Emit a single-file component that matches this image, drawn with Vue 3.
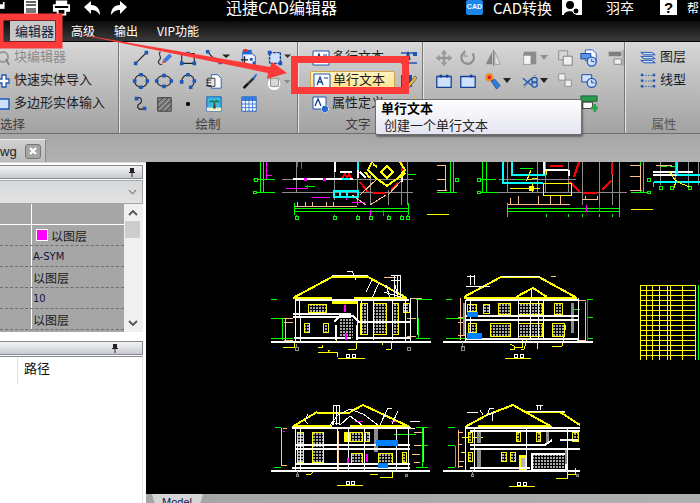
<script setup>
const rows = [
  { text: "以图层", swatch: true },
  { text: "A-SYM", latin: true },
  { text: "以图层" },
  { text: "10", latin: true },
  { text: "以图层" }
];

const tableRows = [285, 290, 295, 300, 305, 310, 315, 320, 325, 330, 335, 340, 345, 350, 355];
const tableCols = [640, 646, 652, 659, 667, 670, 682, 695];

// x, y, w, h of each window on the four elevations
const windows = [
  [360, 303, 8, 32], [373, 303, 14, 32], [392, 303, 7, 32], [308, 304, 19, 9],
  [304, 323, 6, 10], [323, 323, 6, 10], [403, 303, 7, 10],
  [498, 303, 13, 12], [518, 303, 25, 12], [554, 303, 9, 12], [490, 323, 21, 14],
  [518, 323, 25, 14], [552, 323, 13, 14], [467, 304, 10, 8], [483, 304, 7, 10], [468, 323, 9, 10],
  [297, 432, 7, 31], [312, 432, 12, 31], [350, 432, 13, 10], [365, 432, 5, 10],
  [351, 453, 12, 11], [378, 453, 15, 11], [402, 452, 5, 11],
  [468, 432, 5, 11], [468, 452, 5, 10], [516, 432, 5, 10], [536, 432, 5, 10],
  [501, 452, 6, 10], [510, 452, 6, 10], [572, 432, 7, 10]
];
</script>

<template>
  <div class="app">
    <header class="title-bar">
      <svg class="qa save" viewBox="0 0 14 14"><path d="M-6 0H8V12H-6Z" fill="#fff"/><path d="M-2 0H5V4H-2Z" fill="#000"/></svg>
      <svg class="qa pdf" viewBox="0 0 16 14"><path d="M1 0H15V14H1Z" fill="#fff"/><path d="M3 2H13M3 5H13" stroke="#333" stroke-width="1.4"/><path d="M3 8H13V13H3Z" fill="#777"/></svg>
      <svg class="qa printer" viewBox="0 0 20 16"><path d="M4 0H16V4H19V12H15V16H5V12H1V4H4Z" fill="#fff"/><path d="M3 6H17V8H3ZM7 10H13V14H7Z" fill="#000"/></svg>
      <svg class="qa undo" viewBox="0 0 18 16"><path d="M8 1V5C13 5 17 8 17 15C14 11 12 10 8 10V14L1 7Z" fill="#fff"/></svg>
      <svg class="qa redo" viewBox="0 0 18 16"><path d="M10 1V5C5 5 1 8 1 15C4 11 6 10 10 10V14L17 7Z" fill="#fff"/></svg>
      <span class="app-name">迅捷CAD编辑器</span>
      <span class="cad-badge">CAD</span>
      <span class="convert">CAD转换</span>
      <svg class="user-icon" viewBox="0 0 20 15"><path d="M0 0H20V15H0Z" fill="#fff"/><circle cx="8" cy="5" r="4" fill="#000"/><path d="M2 15C2 10 14 10 14 15Z" fill="#000"/><circle cx="14" cy="11" r="3" fill="#000" stroke="#fff"/></svg>
      <span class="user-name">羽卒</span>
      <span class="help-box">?</span>
      <span class="help-text">帮</span>
    </header>

    <nav class="tab-bar">
      <span class="tab active">编辑器</span>
      <span class="tab first">高级</span>
      <span class="tab">输出</span>
      <span class="tab">VIP功能</span>
    </nav>

    <section class="ribbon">
      <div class="group g1">
        <div class="row muted">
          <svg class="mini" viewBox="0 0 12 16"><circle cx="3" cy="7" r="5" fill="none" stroke="#999" stroke-width="2"/><path d="M6 9L9 15" stroke="#888" stroke-width="2"/></svg>
          <span>块编辑器</span>
        </div>
        <div class="row">
          <svg class="mini" viewBox="0 0 12 16"><path d="M-2 6H2V2H6V6H9V10H6V14H2V10H-2Z" fill="#fff" stroke="#1d57b5" stroke-width="1.3"/></svg>
          <span>快速实体导入</span>
        </div>
        <div class="row">
          <svg class="mini" viewBox="0 0 12 16"><path d="M-1 3H9V13H-1Z" fill="#cfe0fa" stroke="#1d57b5" stroke-width="1.4"/></svg>
          <span>多边形实体输入</span>
        </div>
        <div class="group-label left">选择</div>
      </div>

      <div class="group g2">
        <div class="icon-grid">
          <svg class="ic" viewBox="0 0 20 20"><path d="M4 16L16 4" stroke="#222" stroke-width="1.3"/><path d="M2 14H6V18H2ZM14 2H18V6H14Z" fill="#1d57b5"/></svg>
          <svg class="ic" viewBox="0 0 20 20"><path d="M6 3C2 6 9 9 5 12C2 15 5 18 8 17" fill="none" stroke="#333" stroke-width="1.2"/><path d="M9 12L16 5L19 8L12 15Z" fill="#3d7be0"/><path d="M9 12L8 16L12 15Z" fill="#e04040"/></svg>
          <svg class="ic" viewBox="0 0 20 20"><path d="M3 5H17V16H3Z" fill="none" stroke="#222" stroke-width="1.2"/><path d="M1 14H5V18H1ZM15 14H19V18H15ZM8 3H12V7H8Z" fill="#1d57b5"/></svg>
          <svg class="ic" viewBox="0 0 20 20"><path d="M3 2C6 8 9 12 17 15" fill="none" stroke="#222" stroke-width="1.2"/><path d="M1 1H5V5H1ZM7 9H11V13H7ZM15 13H19V17H15Z" fill="#1d57b5"/><path d="M19 6H28L23.5 10Z" fill="#222"/></svg>
          <svg class="ic" viewBox="0 0 20 20"><path d="M3 4H12L17 8V18H3Z" fill="#eef3fc" stroke="#1d57b5"/><path d="M3 1H13V6H3Z" fill="#2368d0"/><path d="M4 0H8V3H4Z" fill="#d33"/><path d="M1 12H9M5 8V16" stroke="#222" stroke-width="1.5"/><path d="M11 10H14V13H11ZM14 14H17V17H14Z" fill="#1d57b5"/></svg>
          <svg class="ic" viewBox="0 0 20 20"><path d="M4 4H16V16H4Z" fill="#cfe0fa" stroke="#123f96" stroke-width="1.6" stroke-dasharray="3 1"/><path d="M2 2H6V6H2ZM14 14H18V18H14Z" fill="#1d57b5"/><path d="M20 6H28L24 10Z" fill="#333"/></svg>

          <svg class="ic" viewBox="0 0 20 20"><circle cx="10" cy="10" r="7" fill="none" stroke="#222" stroke-width="1.2"/><path d="M8 1H12V5H8ZM8 15H12V19H8ZM1 8H5V12H1ZM15 8H19V12H15Z" fill="#1d57b5"/></svg>
          <svg class="ic" viewBox="0 0 20 20"><ellipse cx="10" cy="10" rx="8" ry="6" fill="none" stroke="#222" stroke-width="1.2"/><path d="M8 2H12V6H8ZM8 14H12V18H8ZM0 8H4V12H0ZM16 8H20V12H16Z" fill="#1d57b5"/></svg>
          <svg class="ic" viewBox="0 0 20 20"><path d="M3 11A7 7 0 1 1 12 17" fill="none" stroke="#222" stroke-width="1.2"/><path d="M1 9H5V13H1ZM8 1H12V5H8ZM15 8H19V12H15ZM11 15H15V19H11Z" fill="#1d57b5"/></svg>
          <svg class="ic" viewBox="0 0 20 20"><path d="M7 3H14L18 7V18H7Z" fill="#fff" stroke="#1d57b5"/><path d="M3 7H11V16H3Z" fill="#e8e8e8" stroke="#333"/><path d="M1 9H7M1 12H7M1 15H7" stroke="#222"/></svg>
          <svg class="ic" viewBox="0 0 20 20"><path d="M3 17L8 12L10 14L5 19Z" fill="#111"/><path d="M8 12L14 6L16 8L10 14Z" fill="#333"/><path d="M14 6L18 2L19 3L16 8Z" fill="#2368d0"/></svg>
          <svg class="ic" viewBox="0 0 20 20"><circle cx="9" cy="13" r="6" fill="#f4f4f4" stroke="#fff" stroke-width="2"/><path d="M5 7H14V16H5Z" fill="#d7d7d7" stroke="#8a8a8a"/><path d="M20 9H27L23.5 13Z" fill="#8a8a8a"/></svg>

          <svg class="ic" viewBox="0 0 20 20"><path d="M5 4C11 0 12 8 8 10C4 12 7 18 13 15" fill="none" stroke="#222" stroke-width="1.2"/><path d="M3 2H7V6H3ZM12 13H16V17H12Z" fill="#1d57b5"/></svg>
          <svg class="ic" viewBox="0 0 20 20"><path d="M3 3H18V18H3Z" fill="#8c8c8c" stroke="#333"/><path d="M3 9L9 3M3 15L15 3M6 18L18 6M12 18L18 12" stroke="#333"/></svg>
          <svg class="ic" viewBox="0 0 20 20"><path d="M8 8H12V12H8Z" fill="#000"/></svg>
          <svg class="ic" viewBox="0 0 20 20"><path d="M2 2H18V18H2Z" fill="#3db4e2" stroke="#1d57b5"/><path d="M2 14H18V18H2Z" fill="#f0f0d0"/><path d="M9 15L10 8H11L12 15Z" fill="#4b3a1e"/><path d="M4 9C6 5 10 5 10.500 8C11 5 15 5 17 9C14 7 12 8 10.500 9C9 8 7 7 4 9Z" fill="#0c7a3a"/></svg>
          <svg class="ic" viewBox="0 0 20 20"><path d="M2 2H18V18H2Z" fill="#fff" stroke="#1d57b5"/><path d="M2 2H18V6H2Z" fill="#3b7de0"/><path d="M2 6H18M2 10H18M2 14H18M6 2V18M10 2V18M14 2V18" stroke="#2f6fd6"/></svg>
          <span></span>
        </div>
        <div class="group-label">绘制</div>
      </div>

      <div class="group g3">
        <div class="text-block">
          <div class="text-col">
            <div class="row tool">
              <svg class="tool-ic" viewBox="0 0 18 18"><path d="M1 2H17V16H1Z" fill="#fff" stroke="#1d57b5"/><path d="M4 13L7 5L10 13M5 10H9" fill="none" stroke="#123f96" stroke-width="1.3"/><path d="M11 6H15M11 9H15M11 12H15" stroke="#123f96"/></svg>
              <span>多行文本</span>
            </div>
            <div class="row tool hot">
              <svg class="tool-ic" viewBox="0 0 18 18"><path d="M1 2H17V16H1Z" fill="#fff" stroke="#1d57b5"/><path d="M4 13L7 5L10 13M5 10H9" fill="none" stroke="#123f96" stroke-width="1.3"/><path d="M11 6H15" stroke="#123f96"/></svg>
              <span>单行文本</span>
            </div>
            <div class="row tool">
              <svg class="tool-ic" viewBox="0 0 18 18"><path d="M1 2H14V14H1Z" fill="#fff" stroke="#1d57b5"/><path d="M3 11L6 4L9 11" fill="none" stroke="#123f96" stroke-width="1.3"/><circle cx="13" cy="14" r="3.500" fill="#2368d0" stroke="#fff" stroke-dasharray="1.500 1"/></svg>
              <span>属性定义</span>
            </div>
          </div>
          <div class="side-col">
            <svg class="side-ic" viewBox="0 0 18 18"><path d="M1 4H17M1 14H17" stroke="#1d57b5" stroke-width="1.3"/><path d="M6 11L8 3L10 11" fill="none" stroke="#123f96" stroke-width="1.3"/><path d="M13 3H17V7H13Z" fill="#1d57b5"/></svg>
            <svg class="side-ic" viewBox="0 0 18 18"><path d="M1 3H12V15H1Z" fill="#1d4fa8"/><path d="M6 15L15 4L17 6L8 17Z" fill="#e9c33c" stroke="#333" stroke-width=".6"/></svg>
            <svg class="side-ic" viewBox="0 0 18 18"><path d="M1 5H13V16H1Z" fill="#fff" stroke="#1d57b5"/><path d="M9 9L15 2L17 4L11 11Z" fill="#e9c33c"/></svg>
          </div>
        </div>
        <div class="group-label offset">文字</div>
      </div>

      <div class="group g4">
        <div class="modify-grid">
          <svg class="ic" viewBox="0 0 20 20"><path d="M10 1L13 5H11V9H15V7L19 10L15 13V11H11V15H13L10 19L7 15H9V11H5V13L1 10L5 7V9H9V5H7Z" fill="#9b9b9b" stroke="#8a8a8a" stroke-width=".4"/></svg>
          <svg class="ic" viewBox="0 0 20 20"><path d="M15 5A7 7 0 1 1 7 3" fill="none" stroke="#8d8d8d" stroke-width="2.400"/><path d="M6 1V8H10" fill="none" stroke="#9e9e9e" stroke-width="1.400"/></svg>
          <svg class="ic" viewBox="0 0 20 20"><path d="M9 3L2 17H9Z" fill="#868686"/><path d="M12 3L18 17H12Z" fill="#e3e3e3" stroke="#999"/><path d="M10.500 1V19" stroke="#777"/></svg>
          <span class="with-caret">
            <svg class="ic" viewBox="0 0 20 20"><path d="M3 3H17V17H3Z" fill="#8c8c8c"/><path d="M3 7H11V17H3Z" fill="#f5f5f5" stroke="#777" stroke-dasharray="1.500 1"/></svg>
            <i class="caret dim"></i>
          </span>
          <svg class="ic" viewBox="0 0 20 20"><path d="M3 2H13V12H3Z" fill="#d6d6d6" stroke="#8a8a8a"/><path d="M8 8H18V18H8Z" fill="#efefef" stroke="#777"/></svg>
          <svg class="ic" viewBox="0 0 20 20"><path d="M6 1H14L18 5V13H6Z" fill="#fff" stroke="#1d57b5"/><path d="M1 5H12V11H1Z" fill="#5c93ec" stroke="#123f96"/><circle cx="13" cy="14" r="5" fill="#cfe0fa" stroke="#1d57b5" stroke-width="1.400"/><path d="M13 11V14H16" fill="none" stroke="#123f96"/></svg>
          <svg class="ic" viewBox="0 0 20 20"><path d="M3 3H17V8H3Z" fill="#7e7e7e"/><path d="M9 11H17V17H9Z" fill="#efefef" stroke="#7e7e7e"/><path d="M19 1V19" stroke="#8a8a8a"/></svg>

          <svg class="ic" viewBox="0 0 20 20"><path d="M2 5H18V17H2Z" fill="#cfe0fa" stroke="#123f96" stroke-width="1.400"/><path d="M5 3H8V6H5ZM12 3H15V6H12Z" fill="#123f96"/></svg>
          <svg class="ic" viewBox="0 0 20 20"><path d="M2 5H18V17H2Z" fill="#cfe0fa" stroke="#123f96" stroke-width="1.400"/><path d="M12 3H15V6H12Z" fill="#123f96"/></svg>
          <span class="with-caret">
            <svg class="ic" viewBox="0 0 20 20"><circle cx="6" cy="6" r="4.500" fill="#ef8b2a"/><circle cx="6" cy="6" r="2" fill="#d22"/><path d="M8 10L12 8L18 15L14 19Z" fill="#2f7fd6" stroke="#123f96" stroke-width=".8"/></svg>
            <i class="caret"></i>
          </span>
          <span class="with-caret">
            <svg class="ic" viewBox="0 0 20 20"><path d="M3 18L17 2" stroke="#777" stroke-dasharray="2 1"/><path d="M2 7L12 15M12 7L3 15" stroke="#1d57b5" stroke-width="1.400"/><circle cx="15" cy="9" r="3" fill="none" stroke="#1d57b5" stroke-width="1.400"/><circle cx="15" cy="14" r="3" fill="none" stroke="#1d57b5" stroke-width="1.400"/></svg>
            <i class="caret"></i>
          </span>
          <svg class="ic" viewBox="0 0 20 20"><path d="M3 2H10V9H3Z" fill="#efefef" stroke="#8a8a8a"/><path d="M10 9H17V16H10Z" fill="#efefef" stroke="#8a8a8a"/></svg>
          <svg class="ic" viewBox="0 0 20 20"><path d="M2 3H13V11H2Z" fill="#cfe0fa" stroke="#123f96"/><circle cx="13" cy="12" r="5" fill="#cfe0fa" stroke="#1d57b5" stroke-width="1.400"/><path d="M13 9V12H16" fill="none" stroke="#123f96"/></svg>
          <span></span>

          <span></span><span></span><span></span><span></span><span></span>
          <svg class="ic" viewBox="0 0 20 20"><path d="M1 1H19V7H1Z" fill="#2a9a4c" stroke="#17602e"/><path d="M3 8H14V15H3Z" fill="#fff" stroke="#333"/><path d="M12 13H15V10H18V13H20V16H18V19H15V16H12Z" fill="#28a745"/></svg>
          <span></span>
        </div>
      </div>

      <div class="group g5">
        <div class="row prop">
          <svg class="prop-ic" viewBox="0 0 20 20"><path d="M1 3H15L19 6H5ZM1 8H15L19 11H5ZM1 13H15L19 16H5Z" fill="#cfe0fa" stroke="#1d57b5" stroke-width="1.200"/></svg>
          <span>图层</span>
        </div>
        <div class="row prop">
          <svg class="prop-ic" viewBox="0 0 20 20"><path d="M3 3H17M3 10H17M3 17H17" stroke="#1d57b5" stroke-dasharray="2 1.500"/><path d="M1 1H4V4H1ZM16 1H19V4H16ZM1 8H4V11H1ZM16 8H19V11H16ZM1 15H4V18H1ZM16 15H19V18H16Z" fill="#1d57b5"/></svg>
          <span>线型</span>
        </div>
        <div class="group-label bottom">属性</div>
      </div>
    </section>

    <div class="doc-strip">
      <div class="doc-tab">
        <span class="doc-name">wg</span>
        <span class="doc-close">
          <svg viewBox="0 0 10 10"><path d="M2 2L8 8M8 2L2 8" stroke="#fff" stroke-width="2.200"/></svg>
        </span>
      </div>
    </div>

    <main class="workspace">
      <aside class="side">
        <div class="panel-head">
          <svg class="pin" viewBox="0 0 10 10"><path d="M3 1H7V5H8V6H5.500V10H4.500V6H2V5H3Z" fill="#222"/></svg>
        </div>
        <div class="combo">
          <svg class="chev" viewBox="0 0 10 6"><path d="M1 1L5 5L9 1" fill="none" stroke="#777" stroke-width="1.200"/></svg>
        </div>
        <div class="prop-table">
          <div class="cells">
            <div class="cell-row head"><span class="c1"></span><span class="c2"></span></div>
            <div v-for="(row, i) in rows" :key="i" class="cell-row">
              <span class="c1"></span>
              <span class="c2" :class="{ latin: row.latin, swatched: row.swatch }">
                <i v-if="row.swatch" class="swatch"></i>{{ row.text }}
              </span>
            </div>
          </div>
          <div class="scroll">
            <svg class="arrow" viewBox="0 0 10 6"><path d="M1 5L5 1L9 5" fill="none" stroke="#555" stroke-width="1.800"/></svg>
            <div class="thumb"></div>
            <svg class="arrow down" viewBox="0 0 10 6"><path d="M1 1L5 5L9 1" fill="none" stroke="#555" stroke-width="1.800"/></svg>
          </div>
        </div>
        <div class="panel-head second">
          <svg class="pin" viewBox="0 0 10 10"><path d="M3 1H7V5H8V6H5.500V10H4.500V6H2V5H3Z" fill="#222"/></svg>
        </div>
        <div class="path-list">
          <div class="path-head"><span class="path-gutter"></span><span class="path-title">路径</span></div>
        </div>
      </aside>

      <section class="canvas">
        <svg class="drawing" viewBox="146 162 554 332" shape-rendering="crispEdges" fill="none">
          <defs>
            <pattern id="win" width="3" height="3" patternUnits="userSpaceOnUse">
              <rect width="3" height="3" fill="#a8a8a8"/>
              <path d="M0 0.500H3M0.500 0V3" stroke="#000"/>
            </pattern>
          </defs>
          <!-- top plans -->
          <g stroke="#8c8c8c">
            <path d="M282 179H413M282 192H413M497 192H627M499 179H576M296 162V192M334 162V200M357 162V205M370 175V205M388 190V205M401 162V205M407 162V205"/>
            <path d="M507 162V192M537 162V192M545 162V192M568 162V192M582 162V205M599 162V205M612 162V205M619 162V205M660 162V185M675 162V185M688 162V185M698 162V185"/>
          </g>
          <g stroke="#ffffff" stroke-width="2">
            <path d="M293 179H353M335 162V172M358 162V178M340 172H352M402 176V182M360 172L366 178M544 162V176M545 170H568M569 170V176M653 172H693M653 175H693"/>
          </g>
          <path d="M304 178H307V181H304ZM323 178H326V181H323Z" fill="#ff00ff"/>
          <g stroke="#00ff00">
            <path d="M294 203V215M408 203V215M294 208H408M294 211H408M296 215V218M334 215V218M357 215V218M370 215V218M388 215V218M401 215V218M407 215V218"/>
            <path d="M260 162V192M263 162V192M253 179H275M253 192H275M437 192H457M450 162V192M453 162V192M477 179H496M477 192H497M482 162V192M486 162V192"/>
            <path d="M507 203V215M619 203V215M507 208H619M507 211H619M507 214V217M546 214V217M568 214V217M582 214V217M599 214V217M612 214V217M619 214V217M631 192H647M640 162V192M643 162V192"/>
            <path d="M520 168H533M515 179H523M553 183H560M653 182V187M672 187V188M688 185V188M661 166H667M670 166H676M305 186H315M407 174H416"/>
            <path d="M271 299H277M271 318H293M271 338H293M282 318V340M416 299H432M418 318V338M416 338H430"/>
            <path d="M446 299H452M446 318H465M446 338H465M587 299H593M587 317H593M587 338H593M572 309H580"/>
            <path d="M275 427H281M274 467H281M422 427V467M416 427H428M416 445H428M416 467H428M394 434H416"/>
            <path d="M448 427H455M448 445H455M448 467H455M455 446V467M698 285V360"/>
          </g>
          <g stroke="#00ff00" fill="#000">
            <path d="M254 178H257V181H254ZM253 191H256V193H253ZM295 216H298V219H295ZM333 216H336V219H333ZM356 216H359V219H356ZM369 216H372V219H369ZM387 216H390V219H387ZM400 216H403V219H400ZM406 216H409V219H406ZM455 178H458V181H455ZM477 178H480V181H477ZM477 191H480V193H477ZM647 178H650V181H647ZM647 191H650V193H647ZM659 186H662V189H659ZM670 186H673V189H670ZM688 186H691V189H688Z"/>
          </g>
          <g stroke="#ff00ff">
            <path d="M266 162V179M266 175H272M286 188H307V185M312 197H330M352 202H365M346 190V200M383 210V216M370 210V216M297 162V167M301 162V169M586 205V212M599 205V212M587 300V342M578 342H593"/>
            <path d="M283 431H285M283 428H285M355 421H363M391 421H399"/>
          </g>
          <g stroke="#ff0000" stroke-width="2">
            <path d="M360 182L368 192M373 193H385M391 190L398 183M402 163V175M342 178L345 174L347 178L349 174L351 178"/>
            <path d="M550 166H563M570 182L580 192M583 193H598M602 190L611 181M612 163V175M574 177L579 162"/>
          </g>
          <g stroke="#00ffff" stroke-width="2">
            <path d="M503 162V183H543M512 162V175H545M342 179H350M334 191H358V197H334ZM340 192V197M347 192V197M654 182H700M677 175H700M677 162V175M358 162V170"/>
          </g>
          <g stroke="#ffc08a">
            <path d="M295 206H357M297 202V206M305 202V206M312 202V206M326 202V206M333 202V206M352 195L366 205M386 195L370 205M378 178L360 195M402 180L388 195M437 165H445M437 179H445M437 190H447M445 165V190"/>
            <path d="M508 204H570M510 198V204M518 196V204M538 196V204M550 196V204M560 196V204M582 199H598M585 196V199M597 196V199M630 165H640M630 176H640M630 190H642M640 165V190"/>
            <path d="M656 165H672M284 318H293M284 322H293M284 340H293M285 318V342M356 276H362M384 277H396M410 298H422M417 298V335M407 318H416M407 336H416"/>
            <path d="M458 317H465M458 322H466M458 335H465M460 298V340M551 276H556M577 300H586M577 340H586M585 302V342M298 446H302M306 463H312"/>
            <path d="M281 465V428M281 465H287M283 428H287M338 431V470M423 428V462M414 432H422M414 445H421M412 454H420M414 462H420M458 430V468M458 432H463M458 444H462M458 461H464M458 466H463"/>
            <path d="M326 464H338"/>
          </g>
          <g stroke="#ffff00">
            <path d="M427 214H449M631 209H653M338 358H365M505 358H531M337 485H363M509 486H535"/>
            <path d="M318 347H322V345M330 350H328V353M318 352H337V357M336 330V342M356 342V349M348 349H356M391 342V349M386 349H391M382 342V345M283 347H294V343"/>
            <path d="M510 344L514 346V349H510M522 340V347H514M521 349H524L527 340M552 346H562L566 325M541 342H537V349"/>
            <path d="M306 474H311L314 471M380 477H392V471M370 474H378"/>
            <path d="M556 478H567V464M567 474H575V468M461 452H466M462 437H483"/>
            <path d="M543 168V175M543 183H571V195H543ZM546 170V175M510 188H540M532 183V192M531 170L527 180L538 178M670 172L675 180L682 184L690 187M676 181L674 188"/>
          </g>
          <path d="M381 172L387 166L393 172L387 178ZM372 162L368 170L376 178L387 186L398 178L405 170L400 162M365 172L370 178M400 178L405 173M373 164L377 167" stroke="#ffff00" stroke-width="2"/>
          <path d="M529 186H533V190H529Z" fill="#ffff00" stroke="#ffff00"/>
          <g stroke="#ffff00" stroke-width="2">
            <path d="M293 298L332 277M368 277L407 298M293 298H332M354 298H406M332 277H368"/>
            <path d="M464 297L490 283M490 283L501 277M539 277L577 298M464 298H577M516 297L533 288L547 297M501 277H539"/>
            <path d="M292 427L317 412M350 412L363 405L410 427M317 413H350M295 426H332M350 426H407"/>
            <path d="M465 427L487 415L513 405L552 427M527 412H565M560 412L580 425M478 426H550"/>
          </g>

          <!-- elevation fills -->
          <path d="M332 301H357V304H332ZM344 432H350V442H344ZM519 455H527V470H519Z" fill="#ffff00"/>
          <path d="M521 458H525V468H521Z" fill="#b5b5b5"/>
          <g v-for="(w, i) in windows" :key="i">
            <rect :x="w[0]" :y="w[1]" :width="w[2]" :height="w[3]" fill="#ffff00"/>
            <rect :x="w[0] + 1" :y="w[1] + 1" :width="w[2] - 2" :height="w[3] - 2" fill="url(#win)"/>
          </g>
          <path d="M340 318H353V338H340Z" fill="url(#win)"/>
          <path d="M533 455H564V469H533Z" fill="url(#win)"/>
          <path d="M531.500 453.500H565.500V470H531.500Z" stroke="#fff" stroke-width="2"/>
          <g fill="#8c8c8c">
            <path d="M463 303H466V335H463ZM571 303H574V333H571ZM374 428H378V452H374ZM477 431H481V443H477ZM477 450H481V467H477ZM546 431H549V443H546ZM565 450H568V464H565Z"/>
          </g>

          <!-- white structure -->
          <g stroke="#ffffff">
            <path d="M347 271L352 271L355 277V280M332 275H368M295 299V342M299 299V318M300 318V342M357 299V340M361 299V335M373 299V340M392 299V340M410 298V342M405 298V342"/>
            <path d="M366 292L372 280M379 283L372 298M386 285L390 298M384 292L400 297M395 285L398 298"/>
            <path d="M391 275H400V298M394 275V298M397 275V298M391 280H400"/>
            <path d="M465 300V342M470 300V340M501 276H539M518 300V340M531 288V298M530 300V340M538 300V340M543 300V340M578 298V342M467 276H475M470 275V285M474 275V285M466 286H490"/>
            <path d="M295 428V470M300 428V470M337 428V470M348 428V470M364 428V470M396 428V470M408 428V470M398 411L392 424M392 408H388L380 425M330 425L338 415L350 409L363 414L378 425M340 425L350 416L362 425M335 421L332 425M308 414L305 421L308 424"/>
            <path d="M333 405H339V425M333 405V425M336 405V425M335 423H340M410 421H420M402 428H415"/>
            <path d="M465 428V470M474 428V470M526 428V470M567 428V470M478 412H467M494 408H490L487 415L496 412M492 413V421M480 410L483 415"/>
            <path d="M536 405H543M537 405V410M540 405V410M535 411H544M527 411H565"/>
          </g>
          <g stroke="#ffffff" stroke-width="2">
            <path d="M271 342H431M296 300H409M293 317H351M294 338H351M358 338H410M293 314H351M358 322H410"/>
            <path d="M443 342H593M466 300H578M466 316H578M466 320H578M466 339H578"/>
            <path d="M271 471H430M292 428H411M296 445H410M296 449H410M296 464H410M292 468H410"/>
            <path d="M443 471H580M465 428H580M470 431H580M470 445H545M470 449H580M470 468H530M560 440H578M545 445L552 440"/>
            <path d="M334 322L340 316H353L359 322M336 325V340M357 325V340"/>
          </g>
          <path d="M376 440H397V445H376ZM378 463H387V467H378ZM467 312H477V316H467ZM467 333H481V338H467Z" fill="#0080ff" stroke="#0080ff"/>
          <path d="M344 305H346V312H344ZM345 333H347V340H345ZM347 458H349V463H347ZM366 454H368V462H366Z" fill="#ff00ff"/>
          <circle cx="348" cy="356" r="2" stroke="#fff"/><circle cx="354" cy="356" r="2" stroke="#fff"/>
          <circle cx="516" cy="356" r="2" stroke="#fff"/><circle cx="522" cy="356" r="2" stroke="#fff"/>
          <circle cx="348" cy="483" r="2" stroke="#fff"/><circle cx="353" cy="483" r="2" stroke="#fff"/>
          <circle cx="519" cy="484" r="2" stroke="#fff"/><circle cx="525" cy="484" r="2" stroke="#fff"/>
          <path d="M295 347H298V350H295ZM407 347H410V350H407ZM461 346H464V350H461ZM296 474H298V476H296ZM405 474H407V476H405ZM471 474H473V476H471ZM576 474H578V476H576Z" stroke="#8c8c8c"/>
          <path d="M296 344V348M297 474V471M462 342V348M472 471V474" stroke="#8c8c8c"/>
          <!-- door schedule -->
          <g stroke="#ffff00">
            <path v-for="y in tableRows" :key="'r' + y" :d="`M640 ${y}H695`"/>
            <path v-for="x in tableCols" :key="'c' + x" :d="`M${x} 285V360`"/>
          </g>
        </svg>
        <div class="sheet-strip">
          <span class="sheet-tab">Model</span>
        </div>
      </section>
    </main>

    <svg class="marks" viewBox="0 0 700 503">
      <path d="M0 17H59V45H0ZM294.500 59.500H405.500V90.500H294.500Z" fill="none" stroke="#fb3a3a" stroke-width="7"/>
      <path d="M72 33L270 67L272 62L287 73L267 79L268 73Z" fill="#fb3a3a"/>
    </svg>

    <div class="tooltip">
      <strong>单行文本</strong>
      <span>创建一个单行文本</span>
    </div>
  </div>
</template>

<style scoped>
.app {
  position: relative;
  width: 700px;
  height: 503px;
  overflow: hidden;
  display: flex;
  flex-direction: column;
  background: #fff;
  font-family: "Noto Sans CJK SC", "Liberation Sans", sans-serif;
  font-size: 13px;
  color: #1b1b24;
}

.title-bar {
  flex: 0 0 21px;
  display: flex;
  align-items: flex-start;
  background: #000;
  color: #fff;
}

.title-bar > * { flex: none; white-space: nowrap; }

.qa { display: block; }
.save { width: 8px; height: 12px; }
.pdf { width: 16px; height: 14px; margin-left: 15px; }
.printer { width: 19px; height: 16px; margin-left: 13px; }
.undo { width: 18px; height: 16px; margin-left: 12px; }
.redo { width: 18px; height: 16px; margin-left: 9px; }

.app-name {
  margin-left: 98px;
  font-size: 16px;
  line-height: 15px;
}

.cad-badge {
  width: 17px;
  height: 15px;
  margin-left: 129px;
  border-radius: 2px;
  background: #1c86e8;
  color: #fff;
  font: bold 7px/13px "Liberation Sans", sans-serif;
  text-align: center;
}

.convert {
  margin-left: 10px;
  font-size: 15px;
  line-height: 15px;
}

.user-icon { width: 20px; height: 15px; margin-left: 10px; }

.user-name {
  margin-left: 24px;
  font-size: 14px;
  line-height: 15px;
}

.help-box {
  width: 17px;
  height: 15px;
  margin-left: 26px;
  background: #fff;
  color: #000;
  font: bold 15px/15px "Liberation Sans", sans-serif;
  text-align: center;
}

.help-text {
  margin-left: 0;
  padding-left: 10px;
  font-size: 12px;
  line-height: 15px;
}

.tab-bar {
  flex: 0 0 20px;
  display: flex;
  align-items: stretch;
  background: linear-gradient(#0b0b0b, #3b3b3b);
  padding-left: 10px;
}

.tab {
  margin-right: 19px;
  color: #fff;
  font-size: 12px;
  line-height: 20px;
  white-space: nowrap;
}

.tab.active {
  width: 45px;
  margin-right: 0;
  padding-left: 5px;
  box-sizing: border-box;
  background: #c9c9c9;
  color: #10203a;
  font-size: 13px;
}

.tab.first { margin-left: 16px; }

.ribbon {
  flex: 0 0 93px;
  box-sizing: border-box;
  display: flex;
  border-top: 1px solid #050505;
  border-bottom: 1px solid #6e6e6e;
  background: linear-gradient(#d8d8d8, #c6c6c6 30%, #a2a2a2);
}

.group {
  position: relative;
  flex: none;
  box-sizing: border-box;
  height: 91px;
  padding-top: 4px;
  border-right: 1px solid #777;
  box-shadow: 1px 0 0 #e6e6e6;
}

.g1 { width: 119px; }
.g2 { width: 179px; padding-left: 13px; }
.g3 { width: 125px; padding-left: 14px; }
.g4 { width: 202px; padding-left: 12px; }
.g5 { width: 75px; border-right: 0; box-shadow: none; }

.row {
  display: flex;
  align-items: center;
  height: 23px;
  white-space: nowrap;
}

.row span { padding-bottom: 4px; }

.muted { color: #8b8b8b; }
.mini { flex: none; width: 12px; height: 16px; margin-right: 2px; overflow: visible; }

.group-label {
  position: absolute;
  left: 0;
  right: 0;
  bottom: 0;
  height: 18px;
  line-height: 18px;
  text-align: center;
  font-size: 12.5px;
  color: #3c3c3c;
}

.group-label.left { text-align: left; left: 0; }
.group-label.offset { right: 4px; }
.group-label.bottom { left: 3px; right: 0; color: #555; }

.icon-grid {
  display: grid;
  grid-template-columns: 23px 24px 26px 35px 26px 32px;
  grid-auto-rows: 23px;
  align-items: center;
}

.ic {
  display: block;
  width: 18px;
  height: 18px;
  overflow: visible;
}

.text-block { display: flex; }
.text-col { width: 83px; }

.tool { gap: 2px; }
.tool-ic { flex: none; width: 18px; height: 18px; }

.hot {
  height: 19px;
  margin: 2px 0 2px -2px;
  padding-left: 2px;
  width: 85px;
  border: 1px solid #d6a84a;
  border-radius: 2px;
  box-sizing: border-box;
  background: linear-gradient(#fff3c0, #ffe08a);
}

.side-col {
  display: flex;
  flex-direction: column;
  gap: 5px;
  margin-left: 5px;
  padding-top: 3px;
}

.side-ic { display: block; width: 18px; height: 18px; }

.modify-grid {
  display: grid;
  grid-template-columns: 24px 25px 37px 35px 24px 26px 24px;
  grid-auto-rows: 23px;
  align-items: center;
}

.with-caret { display: flex; align-items: center; gap: 1px; }

.caret {
  display: block;
  flex: none;
  width: 0;
  height: 0;
  border: 4px solid transparent;
  border-top: 5px solid #222;
  border-bottom: 0;
}

.caret.dim { border-top-color: #8f8f8f; }

.prop {
  padding-left: 15px;
  gap: 4px;
  font-size: 13px;
}

.prop-ic { flex: none; width: 16px; height: 16px; }

.doc-strip {
  flex: 0 0 28px;
  box-sizing: border-box;
  padding-top: 5px;
  background: linear-gradient(#a6a6a6, #b2b2b2);
}

.doc-tab {
  display: flex;
  align-items: center;
  width: 46px;
  height: 23px;
  box-sizing: border-box;
  border-right: 1px solid #888;
  background: linear-gradient(#cfcfcf, #bdbdbd);
  border-top: 1px solid #ececec;
}

.doc-name {
  width: 25px;
  color: #222;
  font: 13px "Liberation Sans", sans-serif;
}

.doc-close {
  display: flex;
  align-items: center;
  justify-content: center;
  width: 16px;
  height: 15px;
  box-sizing: border-box;
  border: 1px solid #777;
  border-radius: 3px;
  background: #a5a5a5;
}

.doc-close svg { width: 10px; height: 10px; }

.workspace {
  flex: 1;
  min-height: 0;
  display: flex;
}

.side {
  flex: 0 0 146px;
  box-sizing: border-box;
  padding: 2px 3px 0 0;
  background: #fff;
  border-top: 1px solid #d8d8d8;
  display: flex;
  flex-direction: column;
}

.panel-head {
  flex: 0 0 14px;
  box-sizing: border-box;
  display: flex;
  justify-content: flex-end;
  align-items: center;
  padding-right: 5px;
  border: 1px solid #85898f;
  border-left: 0;
  background: linear-gradient(#f2f3f5, #c8cbd0);
}

.panel-head.second {
  margin-top: 9px;
  padding-right: 22px;
}

.pin { width: 10px; height: 10px; }

.combo {
  flex: 0 0 24px;
  box-sizing: border-box;
  display: flex;
  justify-content: flex-end;
  align-items: center;
  padding-right: 5px;
  margin-top: 1px;
  border: 1px solid #a5a5a5;
  border-left: 0;
  background: linear-gradient(#d6d8da, #e2e2e2);
}

.chev { width: 9px; height: 6px; }

.prop-table {
  flex: 0 0 128px;
  display: flex;
  border-right: 2px solid #f0f0f0;
}

.cells { width: 124px; background: #a6a6a6; }

.cell-row {
  display: flex;
  height: 21px;
  box-sizing: border-box;
  border-bottom: 1px dashed #6f6f6f;
}

.cell-row.head { border-bottom: 1px solid #fff; }

.c1 { flex: 0 0 31px; border-right: 1px solid #fff; }

.c2 {
  flex: 1;
  display: flex;
  align-items: center;
  padding-left: 1px;
  font-size: 12px;
  white-space: nowrap;
  color: #1a1a1a;
}

.c2.latin {
  font: 10px "DejaVu Sans", sans-serif;
  color: #14143a;
}

.c2.swatched { padding-left: 4px; }

.swatch {
  flex: none;
  width: 10px;
  height: 10px;
  margin-right: 3px;
  border: 1px solid #fff;
  background: #ff00ff;
}

.scroll {
  flex: 1;
  background: #f0f0f0;
  display: flex;
  flex-direction: column;
  align-items: center;
  padding-top: 6px;
}

.arrow { width: 10px; height: 6px; }
.arrow.down { margin-top: 82px; }
.thumb { width: 15px; height: 17px; margin-top: 5px; background: #cdcdcd; }

.path-list {
  flex: 1;
  border-right: 1px solid #e2e2e2;
  border-top: 1px solid #85898f;
  margin-top: 1px;
}

.path-head { display: flex; height: 27px; }
.path-gutter { width: 17px; border-right: 1px solid #dedede; }

.path-title {
  padding-left: 6px;
  font-size: 13px;
  line-height: 22px;
  color: #111;
}

.canvas {
  flex: 1;
  min-width: 0;
  display: flex;
  flex-direction: column;
  background: #000;
}

.drawing {
  display: block;
  flex: 0 0 332px;
  width: 554px;
  height: 332px;
}

.sheet-strip {
  flex: 0 0 9px;
  padding-left: 6px;
  background: linear-gradient(90deg, #a5a5a5, #b0b0b0);
  overflow: hidden;
}

.sheet-tab {
  display: block;
  width: 51px;
  height: 14px;
  padding-left: 10px;
  box-sizing: border-box;
  background: #d6d6d6;
  clip-path: polygon(0 0, 100% 0, 92% 100%, 8% 100%);
  color: #10204a;
  font: 11px/17px "Liberation Sans", sans-serif;
}

.marks {
  position: absolute;
  left: 0;
  top: 0;
  width: 700px;
  height: 503px;
  pointer-events: none;
}

.tooltip {
  position: absolute;
  left: 375px;
  top: 99px;
  width: 207px;
  height: 36px;
  box-sizing: border-box;
  padding: 0 5px;
  border: 1px solid #6f6f6f;
  border-radius: 2px;
  background: linear-gradient(#ffffff, #e4e4f0);
  box-shadow: 1px 2px 2px rgba(0, 0, 0, .4);
  display: flex;
  flex-direction: column;
  line-height: 16px;
  color: #222;
}

.tooltip strong { color: #000; font-size: 13px; }
.tooltip span { padding-left: 3px; font-size: 13px; margin-top: 1px; }
</style>
